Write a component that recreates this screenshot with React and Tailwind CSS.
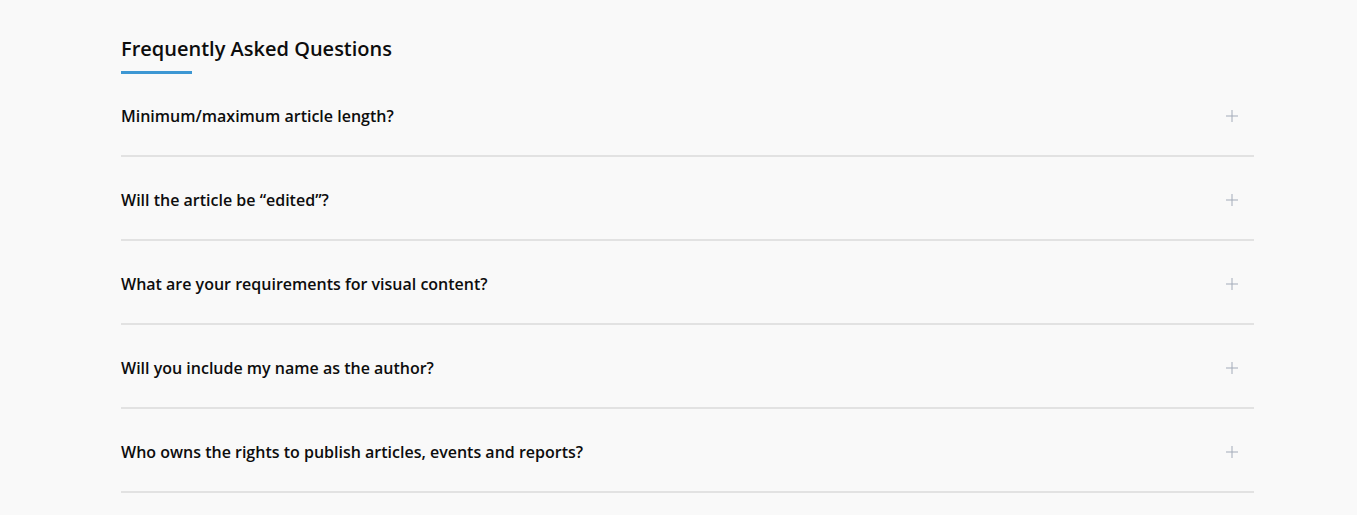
import React, { useState } from "react";

const faqs = [
  "Minimum/maximum article length?",
  "Will the article be \u201cedited\u201d?",
  "What are your requirements for visual content?",
  "Will you include my name as the author?",
  "Who owns the rights to publish articles, events and reports?",
];

function PlusIcon() {
  return (
    <svg width="12" height="12" viewBox="0 0 12 12" className="shrink-0">
      <path d="M6 0v12M0 6h12" stroke="#a3abb9" strokeWidth="1" />
    </svg>
  );
}

export default function App() {
  const [open, setOpen] = useState(null);

  return (
    <div
      className="min-h-[515px] w-full bg-[#f9f9f9] text-[#111]"
      style={{ fontFamily: '"Open Sans", sans-serif' }}
    >
      <div className="ml-[121px] w-[1133px] pt-[35px]">
        {/* Heading */}
        <h2 className="text-[20px] leading-[28px] font-semibold text-[#0d0d0d]">
          Frequently Asked Questions
        </h2>
        <div className="mt-[8px] h-[3px] w-[71px] bg-[#3d97d3]" />

        {/* Questions */}
        <div>
          {faqs.map((q, i) => (
            <div key={i} className="border-b-2 border-[#e2e2e2]">
              <button
                onClick={() => setOpen(open === i ? null : i)}
                className={`flex w-full items-center justify-between pb-[27px] pr-[16px] text-left ${
                  i === 0 ? "pt-[30px]" : "pt-[31px]"
                }`}
              >
                <span className="text-[16px] leading-[24px] font-semibold text-[#0d0d0d]">
                  {q}
                </span>
                <PlusIcon />
              </button>
            </div>
          ))}
        </div>
      </div>
    </div>
  );
}
